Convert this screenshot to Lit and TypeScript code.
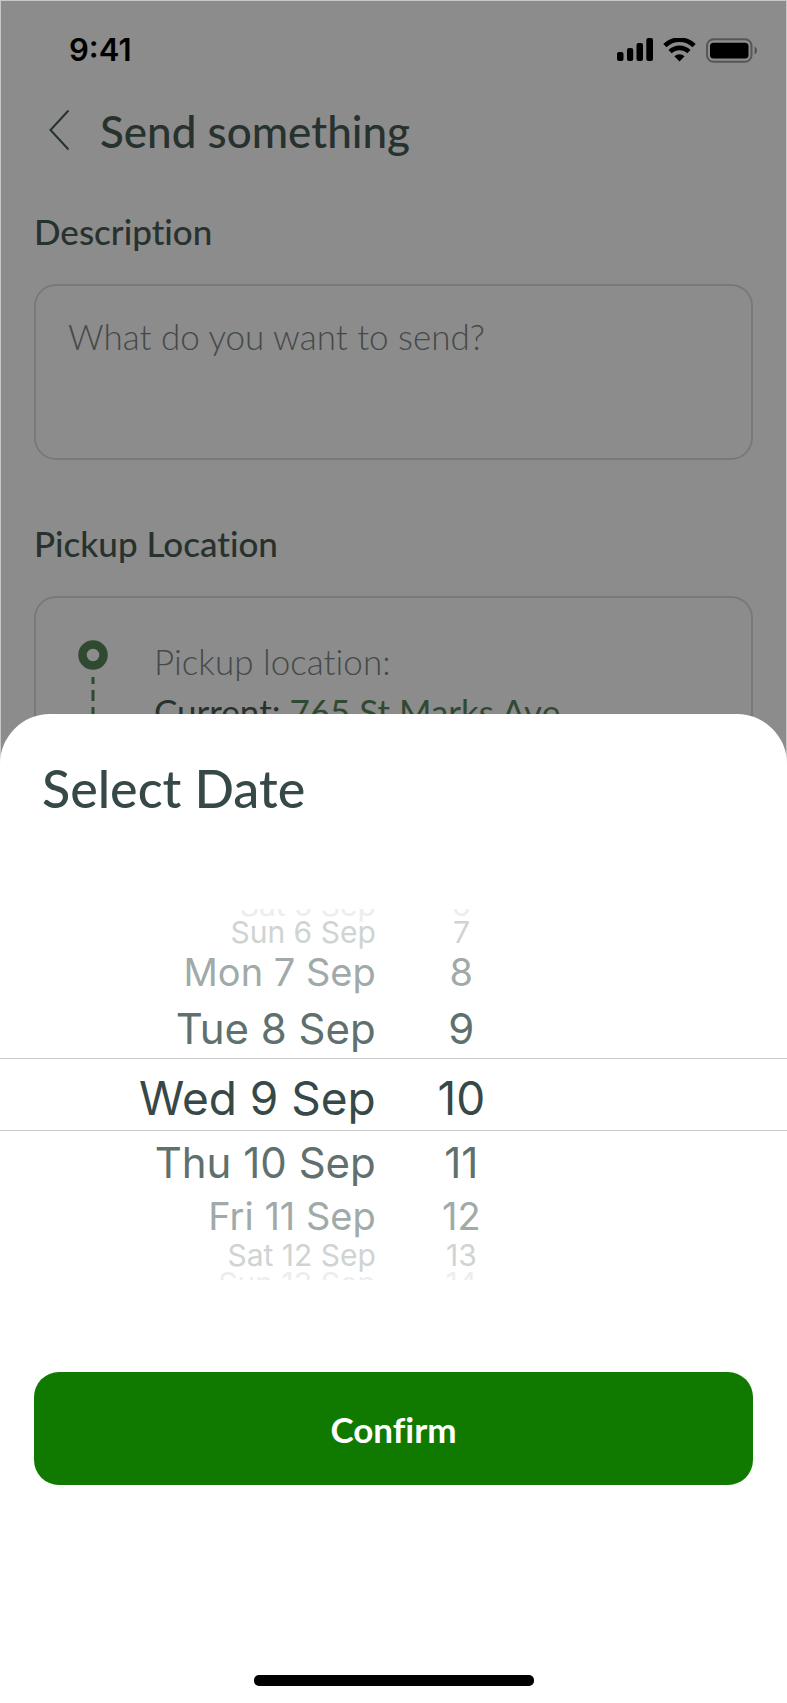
import { LitElement, html, css } from "lit";
import { customElement, state } from "lit/decorators.js";
import { classMap } from "lit/directives/class-map.js";

interface Row {
  date: string;
  hour: string;
  place: string;
}

const ROWS: Row[] = [
  { date: "Sat 5 Sep", hour: "6", place: "edge-top" },
  { date: "Sun 6 Sep", hour: "7", place: "far-top" },
  { date: "Mon 7 Sep", hour: "8", place: "mid-top" },
  { date: "Tue 8 Sep", hour: "9", place: "near-top" },
  { date: "Wed 9 Sep", hour: "10", place: "current" },
  { date: "Thu 10 Sep", hour: "11", place: "near-bottom" },
  { date: "Fri 11 Sep", hour: "12", place: "mid-bottom" },
  { date: "Sat 12 Sep", hour: "13", place: "far-bottom" },
  { date: "Sun 13 Sep", hour: "14", place: "edge-bottom" },
];

@customElement("status-bar")
export class StatusBar extends LitElement {
  static styles = css`
    :host {
      display: flex;
      align-items: center;
      justify-content: space-between;
      height: 100px;
      padding: 0 29px 0 69px;
      box-sizing: border-box;
      color: #000;
      font: 600 31px/40px Inter, sans-serif;
    }
    .icons {
      display: flex;
      align-items: center;
      gap: 10px;
    }
    svg {
      display: block;
    }
  `;

  render() {
    return html`
      <span>9:41</span>
      <div class="icons">
        <svg width="36" height="24" viewBox="0 0 36 24" aria-hidden="true">
          <rect x="0" y="14" width="6.5" height="9" rx="2" />
          <rect x="10" y="10" width="6.2" height="13" rx="2" />
          <rect x="19.5" y="5" width="6.5" height="18" rx="2" />
          <rect x="29.3" y="0" width="6.7" height="23" rx="2" />
        </svg>
        <svg width="33" height="24" viewBox="0 0 33 24" aria-hidden="true">
          <g fill="none" stroke="#000" stroke-width="4.6">
            <path d="M1.9 7.7a20.6 20.6 0 0 1 29.2 0" />
            <path d="M7.1 13.7a13.4 13.4 0 0 1 18.8 0" />
          </g>
          <path d="M11.4 18.2a7.4 7.4 0 0 1 10.2 0L16.5 23.4z" />
        </svg>
        <svg width="52" height="25" viewBox="0 0 52 25" aria-hidden="true">
          <rect x="1" y="1.2" width="44.5" height="22.6" rx="6.5" fill="none" stroke="#000" stroke-opacity=".38" stroke-width="2" />
          <rect x="4" y="4.7" width="38.5" height="15.8" rx="3.5" />
          <path d="M48.6 8.5c3.2 1.4 3.2 6.6 0 8z" fill-opacity=".42" />
        </svg>
      </div>
    `;
  }
}

@customElement("date-wheel")
export class DateWheel extends LitElement {
  static styles = css`
    :host {
      display: block;
      height: 371px;
      overflow: hidden;
      font-family: Inter, sans-serif;
      color: #364847;
    }
    .rows {
      margin: 0;
      padding: 0;
      list-style: none;
    }
    .row {
      display: grid;
      grid-template-columns: 191fr 87fr 122fr;
      align-content: center;
      box-sizing: border-box;
      line-height: 30px;
      white-space: nowrap;
    }
    .date {
      text-align: right;
    }
    .hour {
      text-align: center;
    }
    .current {
      height: 73px;
      padding-top: 6px;
      border: solid #cccccc;
      border-width: 1px 0;
      font-size: 46px;
    }
    .near-top,
    .near-bottom {
      font-size: 42px;
      color: #60706e;
    }
    .near-top {
      height: 58px;
    }
    .near-bottom {
      height: 63px;
    }
    .mid-top,
    .mid-bottom {
      font-size: 38px;
      color: #a0aaa8;
    }
    .mid-top {
      height: 56px;
    }
    .mid-bottom {
      height: 44px;
    }
    .far-top,
    .far-bottom {
      font-size: 30px;
      color: #ced4d2;
    }
    .far-top {
      height: 24px;
    }
    .far-bottom {
      height: 34px;
    }
    .edge-top,
    .edge-bottom {
      font-size: 30px;
      color: #eceeed;
    }
    .edge-top {
      height: 11px;
      align-content: end;
    }
    .edge-bottom {
      height: 8px;
      align-content: start;
      line-height: 22px;
    }
  `;

  render() {
    return html`
      <ol class="rows">
        ${ROWS.map(
          (row) => html`
            <li class=${classMap({ row: true, [row.place]: true })}>
              <span class="date">${row.date}</span>
              <span class="hour">${row.hour}</span>
            </li>
          `
        )}
      </ol>
    `;
  }
}

@customElement("app-root")
export class AppRoot extends LitElement {
  @state() private description = "";

  static styles = css`
    :host {
      display: block;
      position: relative;
      overflow: hidden;
      min-height: 100vh;
      background: #fff;
      color: #364847;
      font-family: Lato, sans-serif;
      font-variant-ligatures: none;
    }
    .screen {
      display: grid;
      grid-template-columns: minmax(0, 1fr);
      grid-template-rows: 714px auto;
      min-height: 100vh;
    }
    .page {
      position: relative;
      height: 764px;
      overflow: hidden;
      color: #485c57;
    }
    .scrim {
      position: absolute;
      inset: 0;
      border: 1px solid #00000038;
      background: #00000073;
      background-clip: padding-box;
      pointer-events: none;
    }
    .over {
      position: absolute;
      inset: 0 0 auto;
      z-index: 1;
    }
    .content {
      display: flex;
      flex-direction: column;
      padding: 98px 34px 0;
    }
    .title-bar {
      display: flex;
      align-items: center;
      gap: 26px;
      height: 66px;
    }
    .back {
      display: block;
      padding: 0 4px 2px 14px;
      border: 0;
      background: none;
      color: inherit;
    }
    .back svg {
      display: block;
    }
    .title {
      margin: 0;
      font-size: 44px;
      font-weight: 500;
      line-height: 64px;
    }
    .label {
      margin-top: 48px;
      font-size: 35px;
      font-weight: 500;
      line-height: 38px;
    }
    .box {
      box-sizing: border-box;
      width: 100%;
      margin: 34px 0 0;
      border: 2px solid #dadcdc;
      border-radius: 22px;
      background: none;
    }
    .description {
      display: block;
      height: 176px;
      padding: 30px 32px;
      color: inherit;
      font: 300 35px/40px Lato, sans-serif;
      font-variant-ligatures: none;
      resize: none;
      outline: none;
    }
    .description::placeholder {
      color: #7c8786;
      opacity: 1;
    }
    .second {
      margin-top: 64px;
    }
    .pickup {
      display: flex;
      gap: 46px;
      height: 240px;
      padding: 38px 42px;
    }
    .route {
      display: block;
    }
    .lines {
      font-size: 35px;
      line-height: 50px;
    }
    .lines p {
      margin: 0;
    }
    .hint {
      color: #7c8786;
      font-weight: 300;
    }
    .address {
      color: #57885a;
    }
    .sheet {
      position: relative;
      z-index: 2;
      display: flex;
      flex-direction: column;
      border-radius: 50px 50px 0 0;
      background: #fff;
    }
    .sheet-title {
      margin: 44px 42px 0;
      font-size: 52px;
      font-weight: 500;
      line-height: 60px;
    }
    .wheel {
      margin-top: 91px;
    }
    .confirm {
      height: 113px;
      margin: 92px 34px 0;
      border: 0;
      border-radius: 25px;
      background: #107a00;
      color: #fff;
      font: 700 35px/40px Lato, sans-serif;
      font-variant-ligatures: none;
    }
    .home {
      align-self: center;
      width: 280px;
      height: 11px;
      margin: auto 0 17px;
      border-radius: 5px;
      background: #000;
    }
  `;

  private onInput(event: Event) {
    this.description = (event.target as HTMLTextAreaElement).value;
  }

  render() {
    return html`
      <div class="screen">
        <main class="page">
          <status-bar class="over"></status-bar>
          <div class="content">
            <header class="title-bar">
              <button class="back" aria-label="Back">
                <svg width="22" height="42" viewBox="0 0 22 42" fill="none" stroke="currentColor" stroke-width="2">
                  <path d="M20.5 1.5L2.5 21l18 19.5" />
                </svg>
              </button>
              <h1 class="title">Send something</h1>
            </header>
            <label class="label" for="description">Description</label>
            <textarea
              id="description"
              class="box description"
              placeholder="What do you want to send?"
              .value=${this.description}
              @input=${this.onInput}
            ></textarea>
            <div class="label second">Pickup Location</div>
            <section class="box pickup">
              <svg class="route" width="30" height="124" viewBox="0 -4 30 124" fill="none" stroke="#57885a" aria-hidden="true">
                <circle cx="15" cy="15" r="10.5" stroke-width="8.5" />
                <path d="M15 37v7M15 50v11M15 67v11M15 84v11" stroke-width="3" />
              </svg>
              <div class="lines">
                <p class="hint">Pickup location:</p>
                <p>Current: <span class="address">765 St Marks Ave</span></p>
              </div>
            </section>
          </div>
          <div class="scrim"></div>
        </main>
        <section class="sheet" aria-label="Select Date">
          <h2 class="sheet-title">Select Date</h2>
          <date-wheel class="wheel"></date-wheel>
          <button class="confirm">Confirm</button>
          <div class="home"></div>
        </section>
      </div>
    `;
  }
}
